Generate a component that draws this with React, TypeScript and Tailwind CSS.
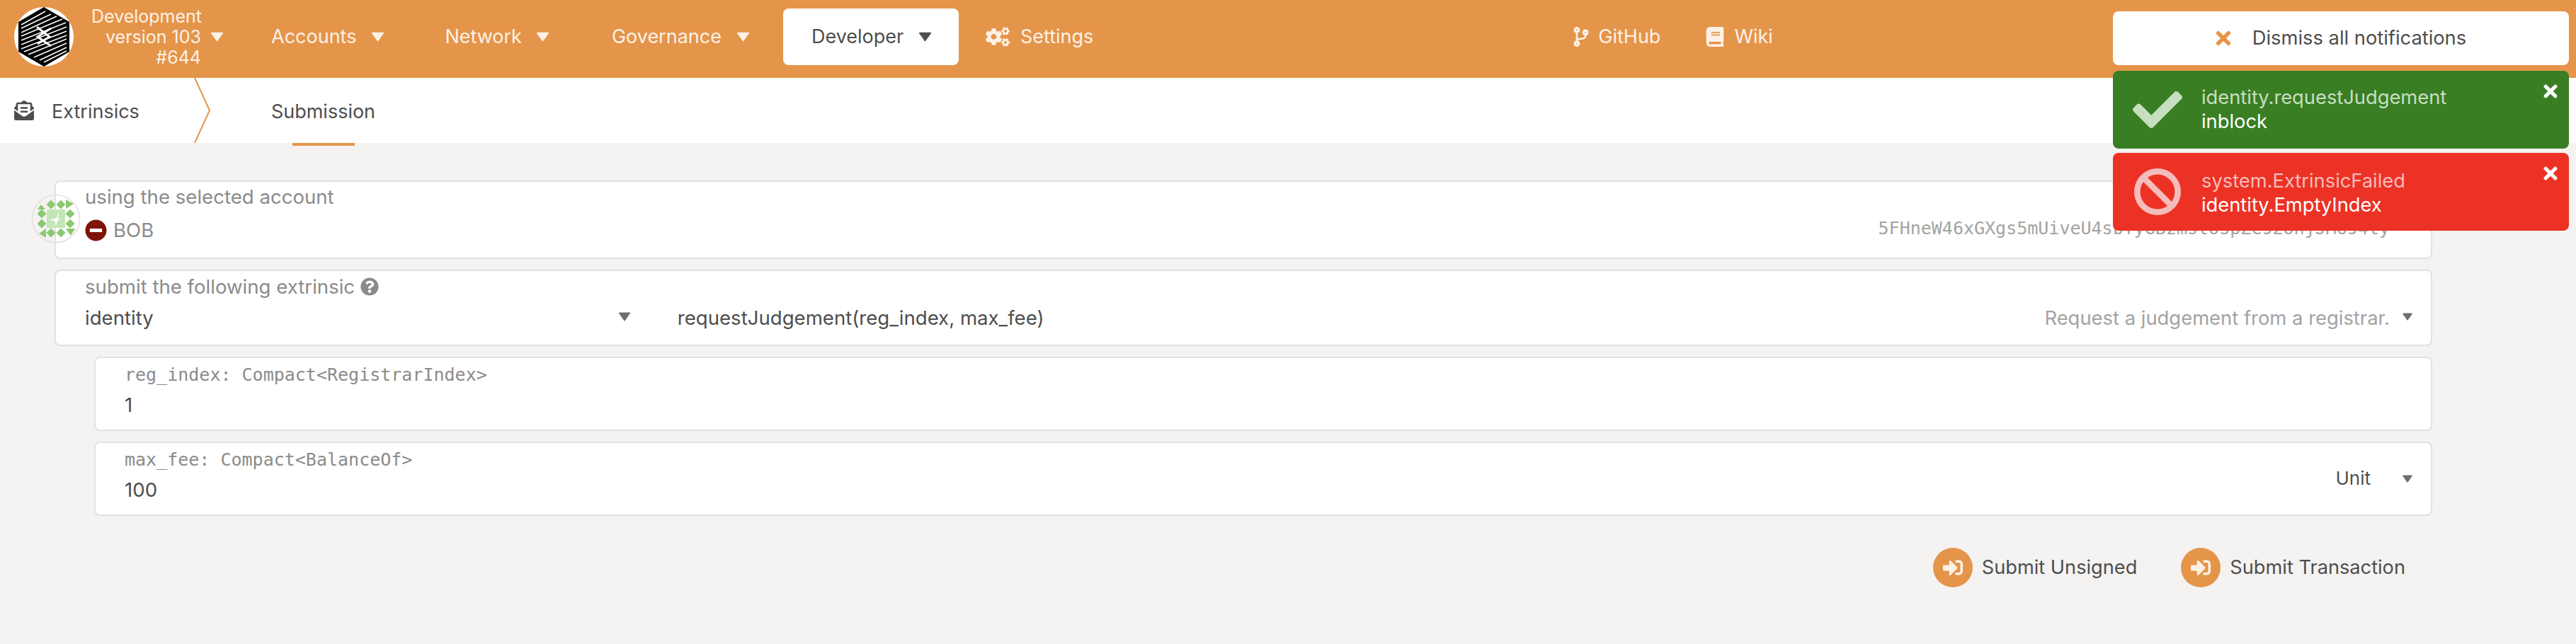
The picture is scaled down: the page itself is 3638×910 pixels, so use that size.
import { FaBan, FaBook, FaCheck, FaCodeBranch, FaCogs, FaEnvelopeOpenText, FaMinusCircle, FaQuestionCircle, FaSignInAlt, FaTimes } from 'react-icons/fa';

const Caret = ({ className = 'w-[17px] h-[14px]' }: { className?: string }) => (
  <svg viewBox="0 0 16 13" className={`shrink-0 fill-current ${className}`}>
    <path d="M1 0.5h14a1 1 0 0 1 .8 1.5l-7 10a1 1 0 0 1-1.6 0l-7-10A1 1 0 0 1 1 .5z" />
  </svg>
);

const NavItem = ({ label, ml, gap }: { label: string; ml: string; gap: string }) => (
  <div className={`flex items-center ${ml} ${gap} text-[#fdf1e6]`}>
    <span>{label}</span>
    <Caret />
  </div>
);

const Logo = () => (
  <svg viewBox="0 0 84 84" className="w-[84px] h-[84px] shrink-0">
    <circle cx="42" cy="42" r="42" fill="#fff" />
    <polygon points="42,0 78,21 78,63 42,84 6,63 6,21" fill="#000" />
    <g stroke="#fff" strokeWidth="1.5">
      <line x1="10" y1="25" x2="44" y2="6" />
      <line x1="10" y1="30" x2="52" y2="10" />
      <line x1="10" y1="36" x2="60" y2="13" />
      <line x1="10" y1="41" x2="68" y2="17" />
      <line x1="10" y1="47" x2="73" y2="22" />
      <line x1="10" y1="53" x2="74" y2="28" />
      <line x1="10" y1="59" x2="74" y2="34" />
      <line x1="14" y1="63" x2="74" y2="40" />
      <line x1="20" y1="67" x2="74" y2="45" />
      <line x1="28" y1="71" x2="74" y2="51" />
      <line x1="36" y1="75" x2="74" y2="57" />
      <line x1="42" y1="78" x2="74" y2="62" />
    </g>
    <path d="M32 28l18 14-17 10M52 30L33 42l19 13" fill="none" stroke="#fff" strokeWidth="3" />
  </svg>
);

const Identicon = () => (
  <svg viewBox="-35 -35 70 70" className="w-[70px] h-[70px]">
    <circle r="33.5" fill="none" stroke="#e2e1e0" strokeWidth="1.6" />
    <rect x="-13" y="-13" width="26" height="26" fill="#c4e5b5" />
    <g fill="#8cc870">
      {[[-7, -20], [7, -20], [-20, -7], [-20, 7], [20, -7], [20, 7], [-7, 20], [7, 20]].map(([x, y]) => (
        <polygon key={`${x}${y}`} points={`${x},${y - 6.5} ${x + 6.5},${y} ${x},${y + 6.5} ${x - 6.5},${y}`} />
      ))}
      <polygon points="-21,-20 -26,-13 -15,-13" />
      <polygon points="14,-27 25,-21 14,-14" />
      <polygon points="-14,14 -14,27 -24,21" />
      <polygon points="14,14 27,14 21,24" />
    </g>
    <polygon points="-10,2 1,-1 4,-11 3,1 9,-1 2,3 0,11 -2,3" fill="#fff" />
  </svg>
);

const Notification = ({ bg, icon, title, body, titleColor, textClass = '' }: { bg: string; icon: React.ReactNode; title: string; body: string; titleColor: string; textClass?: string }) => (
  <div className={`relative flex items-center h-[110px] rounded-[8px] ${bg}`}>
    <div className={`w-[125px] flex justify-center ${titleColor}`}>{icon}</div>
    <div className={`flex flex-col -mt-[1px] leading-[34px] ${textClass}`}>
      <span className={titleColor}>{title}</span>
      <span className="text-white">{body}</span>
    </div>
    <FaTimes className="absolute right-[12px] top-[15px] text-white" size={28} />
  </div>
);

const SubmitButton = ({ label }: { label: string }) => (
  <div className="flex items-center gap-[13px]">
    <div className="w-[56px] h-[56px] rounded-full bg-[#e4954a] flex items-center justify-center text-[#fdf1e6]">
      <FaSignInAlt size={28} />
    </div>
    <span>{label}</span>
  </div>
);

export default function App() {
  return (
    <div className="relative min-h-screen bg-[#f4f3f2] text-[#4e4e4e] text-[27.6px] leading-[34px] [font-family:Inter,sans-serif] overflow-hidden">
      {/* top bar */}
      <header className="flex items-center h-[110px] bg-[#e4954a] pl-[20px] pb-[6px] text-[27px]">
        <Logo />
        <div className="ml-[25px] w-[155px] text-right text-[25px] leading-[29px] text-[#fdf1e6] whitespace-nowrap">
          <div>Development</div>
          <div>version 103</div>
          <div>#644</div>
        </div>
        <Caret className="ml-[14px] w-[17px] h-[14px] text-[#fdf1e6]" />
        <NavItem label="Accounts" ml="ml-[68px]" gap="gap-[22px]" />
        <NavItem label="Network" ml="ml-[86px]" gap="gap-[21px]" />
        <NavItem label="Governance" ml="ml-[89px]" gap="gap-[22px]" />
        <div className="ml-[48px] w-[248px] h-[80px] bg-white rounded-[8px] flex items-center pl-[40px] gap-[22px]">
          <span>Developer</span>
          <Caret />
        </div>
        <div className="ml-[38px] flex items-center gap-[15px] text-[#fdf1e6]">
          <FaCogs size={34} />
          <span>Settings</span>
        </div>
        <div className="ml-[675px] flex items-center gap-[10px] text-[#fdf1e6]">
          <FaCodeBranch size={28} />
          <span>GitHub</span>
        </div>
        <div className="ml-[63px] flex items-center gap-[13px] text-[#fdf1e6]">
          <FaBook size={28} />
          <span>Wiki</span>
        </div>
      </header>

      {/* tabs */}
      <nav className="flex items-center h-[92px] bg-white pl-[20px] text-[27px]">
        <FaEnvelopeOpenText size={28} />
        <span className="ml-[25px] mt-[3px]">Extrinsics</span>
        <svg viewBox="0 0 24 92" className="ml-[77px] w-[24px] h-[92px] fill-none stroke-[#e4954a]">
          <path d="M1 0l21 46-21 46" strokeWidth="2" />
        </svg>
        <div className="relative ml-[85px] flex items-center h-full">
          <span className="mt-[3px]">Submission</span>
          <div className="absolute left-[30px] top-full w-[88px] h-[4px] bg-[#e4954a]" />
        </div>
      </nav>

      {/* form */}
      <main className="flex flex-col gap-[15px] pt-[53px] pl-[77px] pr-[203px]">
        <section className="relative h-[111px] bg-white border-2 border-[#e2e1e0] rounded-[8px] pl-[41px] pr-[58px] pt-[4px]">
          <div className="absolute -left-[35px] top-[17px]"><Identicon /></div>
          <div className="text-[#8b8b8b]">using the selected account</div>
          <div className="flex items-center justify-between mt-[13px]">
            <div className="flex items-center gap-[9px] text-[#8b8b8b]">
              <FaMinusCircle className="text-[#7d1309]" size={31} />
              <span>BOB</span>
            </div>
            <span className="-mt-[4px] text-[#a3a3a3] text-[25px] [font-family:'DejaVu_Sans_Mono',monospace]">5FHneW46xGXgs5mUiveU4sbTyGBzmstUspZC92UhjJM694ty</span>
          </div>
        </section>

        <section className="h-[108px] bg-white border-2 border-[#e2e1e0] rounded-[8px] pl-[41px] pr-[26px] pt-[5px]">
          <div className="flex items-center gap-[8px] text-[#8b8b8b]">
            <span>submit the following extrinsic</span>
            <FaQuestionCircle size={26} />
          </div>
          <div className="flex items-center mt-[10px]">
            <span>identity</span>
            <Caret className="ml-[657px] w-[16px] h-[13px] -mt-[4px] text-[#6e6e6e]" />
            <span className="ml-[67px]">requestJudgement(reg_index, max_fee)</span>
            <span className="ml-auto text-[#a3a3a3] text-[27.4px]">Request a judgement from a registrar.</span>
            <Caret className="ml-[18px] w-[14px] h-[11px] -mt-[4px] text-[#6e6e6e]" />
          </div>
        </section>

        <section className="ml-[56px] h-[105px] bg-white border-2 border-[#e2e1e0] rounded-[8px] pl-[41px] pt-[7px]">
          <div className="text-[#8b8b8b] text-[25px] [font-family:'DejaVu_Sans_Mono',monospace]">reg_index: Compact&lt;RegistrarIndex&gt;</div>
          <div className="mt-[8px]">1</div>
        </section>

        <section className="ml-[56px] h-[105px] bg-white border-2 border-[#e2e1e0] rounded-[8px] pl-[41px] pr-[26px] pt-[7px] flex items-center justify-between">
          <div className="self-start">
            <div className="text-[#8b8b8b] text-[25px] [font-family:'DejaVu_Sans_Mono',monospace]">max_fee: Compact&lt;BalanceOf&gt;</div>
            <div className="mt-[8px]">100</div>
          </div>
          <div className="flex items-center gap-[45px] -mt-[8px] text-[26px]">
            <span>Unit</span>
            <Caret className="w-[14px] h-[11px] text-[#6e6e6e]" />
          </div>
        </section>

        <div className="flex justify-end gap-[62px] mt-[30px] mr-[38px] text-[27.2px]">
          <SubmitButton label="Submit Unsigned" />
          <SubmitButton label="Submit Transaction" />
        </div>
      </main>

      {/* notifications */}
      <aside className="absolute left-[2984px] top-[16px] w-[644px] flex flex-col gap-[6px] text-[27.3px]">
        <div className="flex items-center justify-center gap-[26px] h-[76px] bg-white rounded-[8px] mb-[2px] pr-[4px]">
          <FaTimes className="text-[#e4954a]" size={30} />
          <span>Dismiss all notifications</span>
        </div>
        <Notification bg="bg-[#3a7e24]" titleColor="text-[#c6dfc0]" icon={<FaCheck size={70} />} title="identity.requestJudgement" body="inblock" />
        <Notification bg="bg-[#ec3224]" titleColor="text-[#f6bcbc]" icon={<FaBan size={68} />} title="system.ExtrinsicFailed" body="identity.EmptyIndex" textClass="pt-[4px]" />
      </aside>
    </div>
  );
}
